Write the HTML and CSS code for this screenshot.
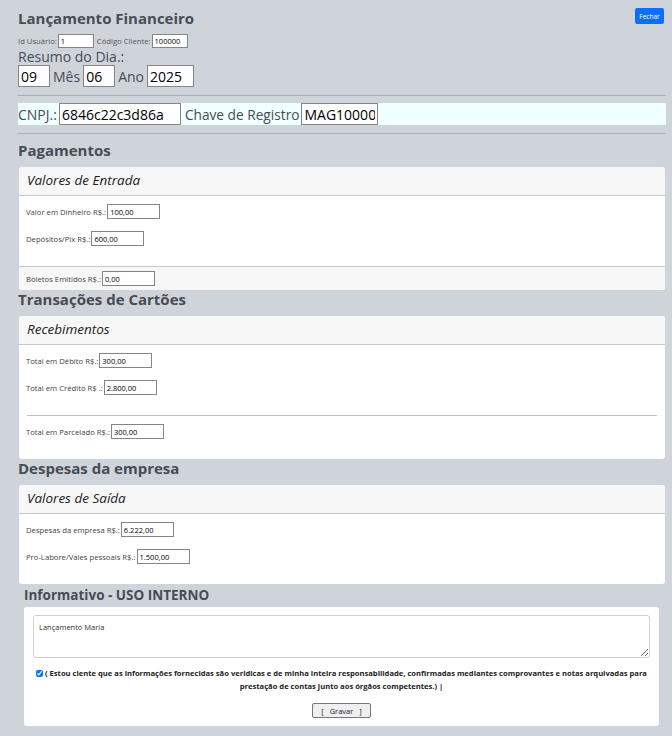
FILE: index.html
```html
<!DOCTYPE html>
<html lang="pt-BR">
<head>
    <meta charset="UTF-8">
    <meta name="viewport" content="width=device-width, initial-scale=1.0">
    <title>Lançamento Financeiro</title>
    <link rel="stylesheet" href="styles.css">
</head>
<body>
    <div class="page">
        <div class="top">
            <h1>Lançamento Financeiro</h1>
            <button class="btn-fechar">Fechar</button>
        </div>
        <div class="ids">
            <label>Id Usuário:</label><input class="in-id" type="text" value="1">
            <label>Código Cliente:</label><input class="in-cod" type="text" value="100000">
        </div>
        <div class="resumo">Resumo do Dia.:</div>
        <div class="data">
            <input class="in-dia" type="text" value="09">
            <span>Mês</span><input class="in-dia" type="text" value="06">
            <span>Ano</span><input class="in-ano" type="text" value="2025">
        </div>
        <hr class="sep">
        <div class="registro">
            <span class="lbl-cnpj">CNPJ.:</span><input class="in-cnpj" type="text" value="6846c22c3d86a">
            <span class="lbl-chave">Chave de Registro</span><input class="in-chave" type="text" value="MAG10000">
        </div>
        <hr class="sep">

        <h2>Pagamentos</h2>
        <div class="card">
            <div class="card-header">Valores de Entrada</div>
            <div class="card-body">
                <div class="campo"><label>Valor em Dinheiro R$.:</label><input type="text" value="100,00"></div>
                <div class="campo"><label>Depósitos/Pix R$.:</label><input type="text" value="600,00"></div>
            </div>
            <div class="card-footer">
                <div class="campo"><label>Boletos Emitidos R$.:</label><input type="text" value="0,00"></div>
            </div>
        </div>

        <h2>Transações de Cartões</h2>
        <div class="card">
            <div class="card-header">Recebimentos</div>
            <div class="card-body">
                <div class="campo"><label>Total em Débito R$.:</label><input type="text" value="300,00"></div>
                <div class="campo"><label>Total em Crédito R$ .:</label><input type="text" value="2.800,00"></div>
                <hr class="linha">
                <div class="campo"><label>Total em Parcelado R$.:</label><input type="text" value="300,00"></div>
            </div>
        </div>

        <h2>Despesas da empresa</h2>
        <div class="card">
            <div class="card-header">Valores de Saída</div>
            <div class="card-body">
                <div class="campo"><label>Despesas da empresa R$.:</label><input type="text" value="6.222,00"></div>
                <div class="campo"><label>Pro-Labore/Vales pessoais R$.:</label><input type="text" value="1.500,00"></div>
            </div>
        </div>

        <div class="info">
            <h3>Informativo - USO INTERNO</h3>
            <div class="info-card">
                <textarea>Lançamento Maria</textarea>
                <p class="ciente"><input type="checkbox" checked> ( Estou ciente que as informações fornecidas são veridicas e de minha inteira responsabilidade, confirmadas mediantes comprovantes e notas arquivadas para prestação de contas junto aos órgãos competentes.) |</p>
                <div class="acoes"><button class="btn-gravar">[ &nbsp; Gravar &nbsp; ]</button></div>
            </div>
        </div>
    </div>
</body>
</html>
```

FILE: styles.css
```css
body {
    margin: 0;
    background-color: #cfd4db;
    font-family: "Open Sans", "Liberation Sans", sans-serif;
    color: #333;
}
.page {
    padding: 8px 6px 0 18px;
}
input {
    box-sizing: border-box;
    font-family: "Open Sans", "Liberation Sans", sans-serif;
    border: 1px solid #858585;
    border-radius: 0;
    background: #fff;
    color: #000;
    padding: 0 2px;
    margin: 0;
}
.top {
    display: flex;
    justify-content: space-between;
    align-items: flex-start;
}
h1 {
    margin: 0;
    font-size: 15px;
    line-height: 20px;
    font-weight: 700;
    color: #474c54;
}
.btn-fechar {
    height: 16px;
    width: 29px;
    padding: 0;
    border: none;
    border-radius: 2px;
    background-color: #0d6efd;
    color: #fff;
    font-family: "Open Sans", "Liberation Sans", sans-serif;
    font-size: 6.5px;
    margin-right: 2px;
}
.ids {
    display: flex;
    align-items: center;
    margin-top: 6px;
    font-size: 7.7px;
    color: #555;
}
.ids label {
    margin-right: 1px;
}
.ids input {
    height: 14px;
    font-size: 7.5px;
}
.in-id {
    width: 36px;
    margin-right: 3px !important;
}
.in-cod {
    width: 36px;
}
.resumo {
    font-size: 14px;
    line-height: 16px;
    margin-top: 1px;
    color: #474c54;
}
.data {
    display: flex;
    align-items: center;
    font-size: 14px;
    color: #474c54;
}
.data input {
    height: 22px;
    font-size: 14px;
}
.data span {
    margin: 0 3px;
}
.in-dia {
    width: 32px;
}
.in-ano {
    width: 47px;
}
.sep {
    margin: 8px 0 7px 0;
    border: none;
    border-top: 1px solid #a9adb4;
}
.registro {
    display: flex;
    align-items: center;
    background-color: #f0ffff;
    font-size: 14px;
    color: #474c54;
}
.registro input {
    height: 22px;
    font-size: 14px;
}
.lbl-cnpj {
    margin-right: 2px;
}
.lbl-chave {
    font-size: 13.7px;
    margin-right: 2px;
}
.in-cnpj {
    width: 122px;
    margin-right: 4px !important;
}
.in-chave {
    width: 77px;
}
h2 {
    margin: 0;
    font-size: 15px;
    line-height: 19px;
    font-weight: 700;
    color: #474c54;
}
.card {
    margin: 7px 1px 0 1px;
    background-color: #fff;
    border-radius: 3px;
    overflow: hidden;
}
.card-header {
    height: 29px;
    box-sizing: border-box;
    padding: 2px 8px;
    background-color: #f7f7f7;
    border-bottom: 1px solid #c8c8c8;
    font-style: italic;
    font-size: 13.5px;
    line-height: 22px;
    color: #222;
}
.card-body {
    padding: 8px 7px;
}
.card-footer {
    padding: 4px 7px;
    background-color: #f7f7f7;
    border-top: 1px solid #c8c8c8;
}
.campo {
    display: flex;
    align-items: center;
    font-size: 7.7px;
    color: #444;
    margin-bottom: 12px;
}
.card-footer .campo {
    margin-bottom: 0;
}
.campo label {
    margin-right: 1px;
}
.campo input {
    width: 53px;
    height: 15px;
    font-size: 7.5px;
}
.linha {
    margin: 20px 1px 8px 1px;
    border: none;
    border-top: 1px solid #c0c0c0;
}
.info {
    margin: 0 7px 0 6px;
}
h3 {
    margin: 0;
    padding-top: 2px;
    font-size: 13.5px;
    line-height: 18px;
    font-weight: 700;
    color: #474c54;
}
.info-card {
    margin-top: 3px;
    background-color: #fff;
    border-radius: 3px;
    padding: 8px 9px 8px 9px;
}
textarea {
    display: block;
    box-sizing: border-box;
    width: 100%;
    height: 43px;
    border: 1px solid #d0d0d0;
    border-radius: 3px;
    padding: 6px 5px;
    font-family: "Open Sans", "Liberation Sans", sans-serif;
    font-size: 7.5px;
    color: #333;
    resize: vertical;
}
.ciente {
    margin: 9px 0 0 0;
    text-align: center;
    font-size: 7.6px;
    line-height: 13px;
    font-weight: 700;
    color: #222;
}
.ciente input {
    width: 7px;
    height: 7px;
    margin: 0;
    vertical-align: -1px;
}
.acoes {
    display: flex;
    justify-content: center;
    margin-top: 10px;
}
.btn-gravar {
    width: 59px;
    height: 15px;
    padding: 0;
    border: 1px solid #777;
    border-radius: 2px;
    background-color: #efefef;
    font-family: "Open Sans", "Liberation Sans", sans-serif;
    font-size: 7.5px;
    color: #222;
}
```
